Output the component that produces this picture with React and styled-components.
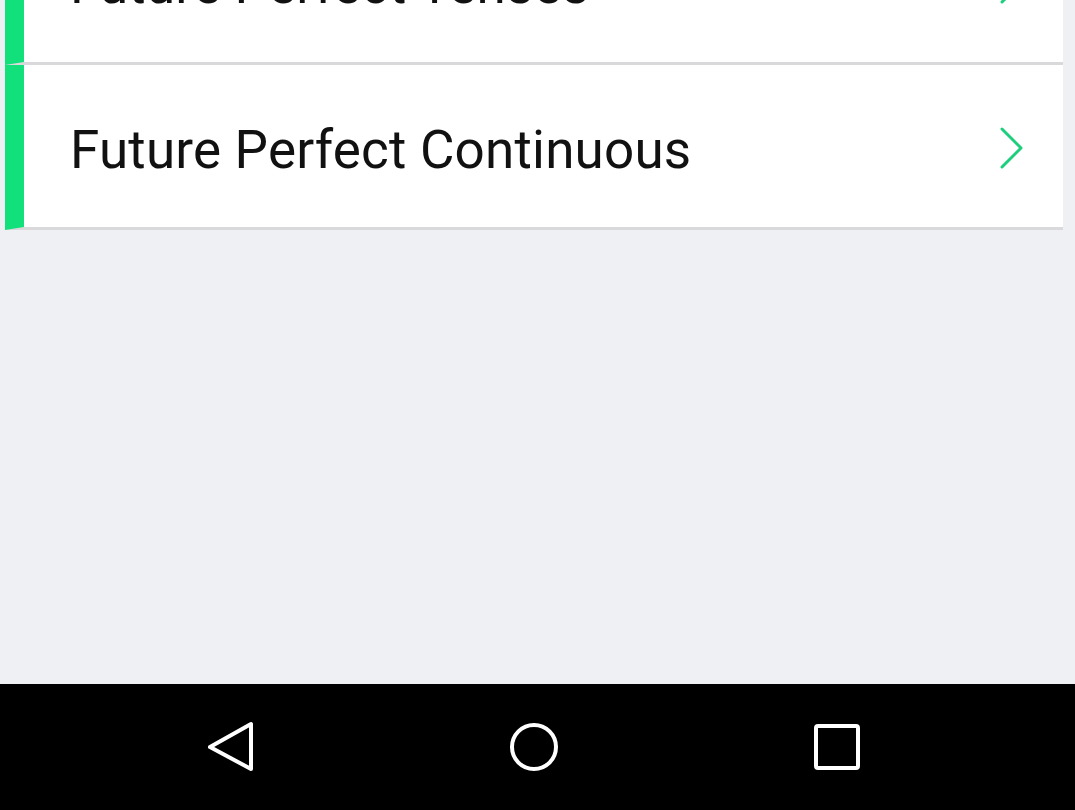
import React from "react";
import styled, { createGlobalStyle } from "styled-components";

const GlobalStyle = createGlobalStyle`
  html, body {
    margin: 0;
    padding: 0;
    background: #eff0f3;
  }
  body {
    font-family: Roboto, "Noto Sans", sans-serif;
  }
`;

const Screen = styled.div`
  display: flex;
  flex-direction: column;
  width: 1075px;
  height: 810px;
  overflow: hidden;
  background: #eff0f3;
`;

const Content = styled.div`
  flex: 1;
  overflow: hidden;
`;

// list is scrolled, first row only partly visible
const TenseList = styled.div`
  display: flex;
  flex-direction: column;
  margin-top: -100px;
  padding: 0 12px 0 5px;
`;

const TenseRow = styled.div`
  display: flex;
  align-items: center;
  height: 162px;
  background: #fff;
  border-left: 19px solid #12e07b;
  border-bottom: 3px solid #d9d9db;
  padding: 0 38px 0 46px;
  cursor: pointer;
`;

const TenseTitle = styled.span`
  flex: 1;
  padding-top: 7px;
  font-size: 53px;
  color: #111;
  letter-spacing: 0.2px;
`;

const Chevron = styled.svg`
  width: 26px;
  height: 42px;
  margin-top: 4px;
`;

const NavBar = styled.div`
  display: grid;
  grid-template-columns: repeat(3, 1fr);
  height: 126px;
  background: #000;
  align-items: center;
  justify-items: center;
  padding: 0 86px 0 79px;
`;

const NavIcon = styled.svg`
  width: 52px;
  height: 52px;
`;

const tenses = ["Future Perfect Tenses", "Future Perfect Continuous"];

function ChevronRight() {
  return (
    <Chevron viewBox="0 0 26 42">
      <path
        d="M3 2 L22 21 L3 40"
        fill="none"
        stroke="#1dcf7c"
        strokeWidth="3"
        strokeLinecap="round"
        strokeLinejoin="round"
      />
    </Chevron>
  );
}

export default function App() {
  return (
    <Screen>
      <GlobalStyle />
      <Content>
        <TenseList>
          {tenses.map((t) => (
            <TenseRow key={t}>
              <TenseTitle>{t}</TenseTitle>
              <ChevronRight />
            </TenseRow>
          ))}
        </TenseList>
      </Content>
      <NavBar>
        <NavIcon viewBox="0 0 52 52">
          <path
            d="M46 3 L46 48 L5 26 Z"
            fill="none"
            stroke="#fff"
            strokeWidth="4"
            strokeLinejoin="round"
          />
        </NavIcon>
        <NavIcon viewBox="0 0 52 52">
          <circle cx="26" cy="26" r="22" fill="none" stroke="#fff" strokeWidth="4" />
        </NavIcon>
        <NavIcon viewBox="0 0 52 52">
          <rect x="5" y="5" width="42" height="42" rx="2" fill="none" stroke="#fff" strokeWidth="4" />
        </NavIcon>
      </NavBar>
    </Screen>
  );
}
